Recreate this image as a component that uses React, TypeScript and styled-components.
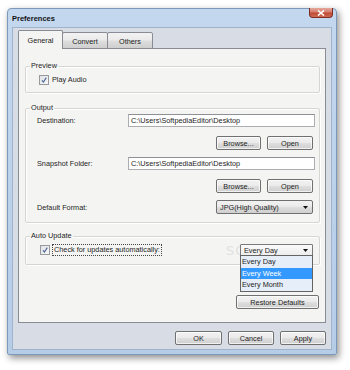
import React from "react";
import styled, { createGlobalStyle } from "styled-components";

const Global = createGlobalStyle`
  html, body { margin: 0; padding: 0; background: #ffffff; }
  body { font-family: "Liberation Sans", Arial, sans-serif; font-size: 7.3px; color: #1e1e1e; }
  * { box-sizing: border-box; }
`;

const Page = styled.div`
  width: 350px;
  height: 370px;
  padding: 8px 0 0 7px;
`;

const Window = styled.div`
  width: 330px;
  height: 347px;
  border: 1px solid #7d98bb;
  border-radius: 4px 4px 2px 2px;
  background: linear-gradient(#c3d8ef, #b6cde8);
  box-shadow: 2px 3px 7px rgba(0, 0, 0, 0.45);
  display: flex;
  flex-direction: column;
`;

const TitleBar = styled.div`
  height: 18px;
  display: flex;
  align-items: flex-start;
  justify-content: space-between;
  padding-left: 4px;
`;

const Title = styled.div`
  font-weight: bold;
  font-size: 7.5px;
  line-height: 9px;
  margin-top: 5px;
  color: #111;
`;

const CloseButton = styled.div`
  width: 24px;
  height: 10px;
  margin: -1px 3px 0 0;
  border: 1px solid #7a2f26;
  border-top: none;
  border-radius: 0 0 4px 4px;
  background: linear-gradient(#e5a99d 0%, #d47d6c 45%, #c04a35 55%, #cf6a52 100%);
  display: flex;
  align-items: center;
  justify-content: center;
`;

const Client = styled.div`
  flex: 1;
  margin: 0 4px 4px 4px;
  border: 1px solid #9fb3cd;
  background: #d8dce4;
  padding: 2px 5px 0 5px;
  display: flex;
  flex-direction: column;
`;

const TabRow = styled.div`
  display: flex;
  align-items: flex-end;
  height: 19px;
  position: relative;
  z-index: 2;
`;

const Tab = styled.div<{ $active?: boolean }>`
  height: ${(p) => (p.$active ? 19 : 17)}px;
  width: ${(p) => (p.$active ? 45 : 46)}px;
  margin-left: ${(p) => (p.$active ? 0 : -1)}px;
  border: 1px solid #898c95;
  border-bottom: ${(p) => (p.$active ? "none" : "1px solid #898c95")};
  border-radius: 2px 2px 0 0;
  background: ${(p) =>
    p.$active ? "#f4f4f2" : "linear-gradient(#f2f2f2 0%, #ebebeb 45%, #dddddd 55%, #cfcfcf 100%)"};
  display: flex;
  align-items: center;
  justify-content: center;
  padding-top: ${(p) => (p.$active ? 0 : 1)}px;
  color: #222;
`;

const Panel = styled.div`
  position: relative;
  height: 275px;
  margin-top: -1px;
  border: 1px solid #898c95;
  background: #f4f4f2;
  padding: 12px 5px 0 6px;
  display: flex;
  flex-direction: column;
`;

const Group = styled.fieldset<{ $gap?: number }>`
  margin: ${(p) => p.$gap ?? 0}px 0 0 0;
  padding: 0;
  min-inline-size: 0;
  border: 1px solid #d5d5d2;
  border-radius: 2px;
  box-shadow: inset 1px 1px 0 #ffffff, 1px 1px 0 #ffffff;
`;

const Legend = styled.legend`
  margin-left: 4px;
  padding: 0 1px;
  line-height: 10px;
  color: #1e1e1e;
`;

const PreviewBody = styled.div`
  padding: 4px 0 7px 13px;
`;

const CheckRow = styled.label`
  display: flex;
  align-items: center;
  gap: 3px;
  line-height: 10px;
`;

const Box = styled.span`
  width: 10px;
  height: 10px;
  border: 1px solid #97999c;
  background: linear-gradient(135deg, #dfe1e5, #f8f8f8);
  display: flex;
  align-items: center;
  justify-content: center;
  flex: none;
`;

const FocusText = styled.span<{ $focus?: boolean }>`
  padding: 0 1px;
  outline: ${(p) => (p.$focus ? "1px dotted #444" : "none")};
`;

const OutputBody = styled.div`
  padding: 1px 4px 8px 11px;
  display: flex;
  flex-direction: column;
`;

const FieldRow = styled.div<{ $top?: number }>`
  display: grid;
  grid-template-columns: 91px 1fr;
  align-items: center;
  margin-top: ${(p) => p.$top ?? 0}px;
`;

const TextBox = styled.div`
  height: 13px;
  border: 1px solid #abadb3;
  border-top-color: #8d9096;
  background: #ffffff;
  padding-left: 2px;
  display: flex;
  align-items: center;
  white-space: nowrap;
  overflow: hidden;
`;

const ButtonRow = styled.div<{ $top?: number }>`
  display: flex;
  justify-content: flex-end;
  gap: 6px;
  margin-top: ${(p) => p.$top ?? 0}px;
  padding-right: 2px;
`;

const Button = styled.div<{ $w: number }>`
  width: ${(p) => p.$w}px;
  height: 14px;
  border: 1px solid #707070;
  border-radius: 2px;
  background: linear-gradient(#f2f2f2 0%, #ebebeb 45%, #dddddd 55%, #cfcfcf 100%);
  box-shadow: inset 0 0 0 1px rgba(255, 255, 255, 0.7);
  display: flex;
  align-items: center;
  justify-content: center;
  color: #1e1e1e;
`;

const Select = styled.div<{ $w: number }>`
  position: relative;
  width: ${(p) => p.$w}px;
  height: 14px;
  border: 1px solid #707070;
  border-radius: 2px;
  background: linear-gradient(#f2f2f2 0%, #ebebeb 45%, #dddddd 55%, #cfcfcf 100%);
  display: flex;
  align-items: center;
  justify-content: space-between;
  padding: 0 4px 0 3px;
  justify-self: end;
`;

const SelectRow = styled.div<{ $top?: number }>`
  display: grid;
  grid-template-columns: 91px 1fr;
  align-items: center;
  justify-items: end;
  margin-top: ${(p) => p.$top ?? 0}px;
  padding-right: 2px;
  & > :first-child { justify-self: start; }
`;

const UpdateBody = styled.div`
  padding: 3px 6px 8px 14px;
  display: flex;
  align-items: center;
  justify-content: space-between;
`;

const LightSelect = styled(Select)`
  height: 12px;
  border-color: #7a7a7a;
  background: linear-gradient(#fafafa, #ededed);
  border-radius: 1px;
  z-index: 3;
`;

const DropList = styled.div`
  position: absolute;
  top: 100%;
  left: -1px;
  right: -1px;
  border: 1px solid #646464;
  background: #e6eef9;
  display: flex;
  flex-direction: column;
  padding: 0;
`;

const DropItem = styled.div<{ $sel?: boolean }>`
  height: 11.5px;
  line-height: 11.5px;
  padding-left: 1px;
  background: ${(p) => (p.$sel ? "#3399ff" : "transparent")};
  color: ${(p) => (p.$sel ? "#ffffff" : "#1e1e1e")};
`;

const RestoreRow = styled.div`
  display: flex;
  justify-content: flex-end;
  margin-top: 30px;
  padding-right: 1px;
`;

const Footer = styled.div`
  display: flex;
  justify-content: flex-end;
  gap: 6px;
  margin-top: 8px;
  padding-right: 0px;
`;

const Watermark = styled.div`
  position: absolute;
  left: 207px;
  top: 194px;
  font-family: "DejaVu Sans", sans-serif;
  font-size: 13px;
  letter-spacing: 1px;
  color: rgba(200, 200, 200, 0.45);
  pointer-events: none;
  z-index: 1;
`;

const Check = () => (
  <svg width="8" height="8" viewBox="0 0 8 8">
    <path d="M2 4.3 L3.4 6 L6.3 1.6" fill="none" stroke="#4a6596" strokeWidth="1.1" />
  </svg>
);

const Arrow = () => (
  <svg width="5" height="3" viewBox="0 0 5 3">
    <polygon points="0,0 5,0 2.5,3" fill="#111" />
  </svg>
);

const CloseX = () => (
  <svg width="8" height="6" viewBox="0 0 8 6">
    <path d="M1 0.5 L7 5.5 M7 0.5 L1 5.5" stroke="#ffffff" strokeWidth="1.6" />
  </svg>
);

export default function App() {
  return (
    <>
      <Global />
      <Page>
        <Window>
          <TitleBar>
            <Title>Preferences</Title>
            <CloseButton>
              <CloseX />
            </CloseButton>
          </TitleBar>
          <Client>
            <TabRow>
              <Tab $active>General</Tab>
              <Tab>Convert</Tab>
              <Tab>Others</Tab>
            </TabRow>
            <Panel>
              <Watermark aria-hidden="true">SOFTPEDIA</Watermark>
              <Group>
                <Legend>Preview</Legend>
                <PreviewBody>
                  <CheckRow>
                    <Box>
                      <Check />
                    </Box>
                    <span>Play Audio</span>
                  </CheckRow>
                </PreviewBody>
              </Group>
              <Group $gap={10}>
                <Legend>Output</Legend>
                <OutputBody>
                  <FieldRow>
                    <span>Destination:</span>
                    <TextBox>C:\Users\SoftpediaEditor\Desktop</TextBox>
                  </FieldRow>
                  <ButtonRow $top={9}>
                    <Button $w={45}>Browse...</Button>
                    <Button $w={46}>Open</Button>
                  </ButtonRow>
                  <FieldRow $top={7}>
                    <span>Snapshot Folder:</span>
                    <TextBox>C:\Users\SoftpediaEditor\Desktop</TextBox>
                  </FieldRow>
                  <ButtonRow $top={9}>
                    <Button $w={45}>Browse...</Button>
                    <Button $w={46}>Open</Button>
                  </ButtonRow>
                  <SelectRow $top={7}>
                    <span>Default Format:</span>
                    <Select $w={97}>
                      <span>JPG(High Quality)</span>
                      <Arrow />
                    </Select>
                  </SelectRow>
                </OutputBody>
              </Group>
              <Group $gap={8}>
                <Legend>Auto Update</Legend>
                <UpdateBody>
                  <CheckRow>
                    <Box>
                      <Check />
                    </Box>
                    <FocusText $focus>Check for updates automatically:</FocusText>
                  </CheckRow>
                  <LightSelect $w={73}>
                    <span>Every Day</span>
                    <Arrow />
                    <DropList>
                      <DropItem>Every Day</DropItem>
                      <DropItem $sel>Every Week</DropItem>
                      <DropItem>Every Month</DropItem>
                    </DropList>
                  </LightSelect>
                </UpdateBody>
              </Group>
              <RestoreRow>
                <Button $w={83}>Restore Defaults</Button>
              </RestoreRow>
            </Panel>
            <Footer>
              <Button $w={47}>OK</Button>
              <Button $w={46}>Cancel</Button>
              <Button $w={46}>Apply</Button>
            </Footer>
          </Client>
        </Window>
      </Page>
    </>
  );
}
